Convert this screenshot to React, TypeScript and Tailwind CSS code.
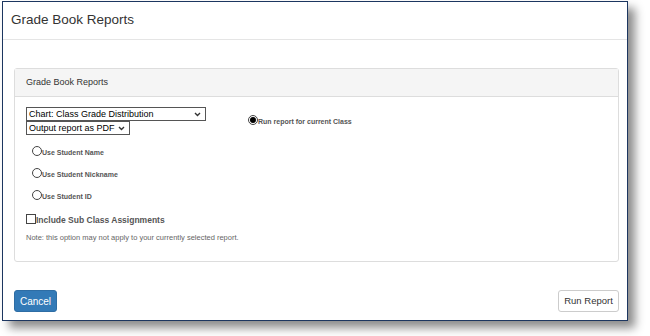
import React from "react";

function FakeSelect({ label, width }: { label: string; width: string }) {
  return (
    <div
      className={`flex items-center justify-between h-[14px] border border-[#555] bg-white pl-[2px] pr-[4px] text-[9px] leading-none text-black whitespace-nowrap ${width}`}
    >
      <span>{label}</span>
      <svg width="7" height="5" viewBox="0 0 7 5" className="mt-[1px] shrink-0">
        <path d="M1 1 L3.5 3.5 L6 1" stroke="#333" strokeWidth="1.4" fill="none" />
      </svg>
    </div>
  );
}

function Radio({ label, checked = false }: { label: string; checked?: boolean }) {
  return (
    <div className="flex items-end">
      <span className="w-[10px] h-[10px] rounded-full border border-[#444] bg-white flex items-center justify-center">
        {checked && <span className="w-[6px] h-[6px] rounded-full bg-black" />}
      </span>
      <span className="text-[7px] font-bold text-[#555] leading-none whitespace-nowrap">{label}</span>
    </div>
  );
}

export default function App() {
  return (
    <div
      className="w-[650px] h-[336px] bg-white overflow-hidden"
      style={{ fontFamily: '"Liberation Sans", Arial, sans-serif' }}
    >
      <div className="ml-[2px] mt-[1px] w-[626px] h-[320px] border border-[#1c3660] bg-white shadow-[7px_7px_9px_rgba(0,0,0,0.45)] flex flex-col">
        <header className="h-[38px] border-b border-[#e5e5e5] flex items-center pl-[8px] text-[13.5px] text-[#333]">
          Grade Book Reports
        </header>

        <div className="pl-[11px] pt-[28px]">
          <section className="w-[605px] h-[194px] rounded-[3px] border border-[#ddd] flex flex-col">
            <div className="h-[28px] bg-[#f5f5f5] border-b border-[#ddd] flex items-center pl-[11px] text-[9px] text-[#333]">
              Grade Book Reports
            </div>

            <div className="pl-[11px] pt-[10px]">
              <div className="flex">
                <div className="flex flex-col">
                  <FakeSelect label="Chart: Class Grade Distribution" width="w-[180px]" />
                  <FakeSelect label="Output report as PDF" width="w-[104px]" />
                </div>
                <div className="ml-[42px] mt-[8px]">
                  <Radio label="Run report for current Class" checked />
                </div>
              </div>

              <div className="ml-[6px] mt-[11px] flex flex-col gap-[12px]">
                <Radio label="Use Student Name" />
                <Radio label="Use Student Nickname" />
                <Radio label="Use Student ID" />
              </div>

              <div className="mt-[14px] flex items-end">
                <span className="w-[10px] h-[10px] border border-[#444] bg-white" />
                <span className="text-[8.5px] font-bold text-[#555] leading-none">
                  Include Sub Class Assignments
                </span>
              </div>

              <p className="mt-[10px] text-[7.5px] text-[#666] leading-none">
                Note: this option may not apply to your currently selected report.
              </p>
            </div>
          </section>
        </div>

        <div className="mt-auto mb-[8px] pl-[11px] pr-[8px] flex justify-between">
          <button className="w-[43px] h-[22px] rounded-[3px] bg-[#337ab7] border border-[#2e6da4] text-white text-[10px]">
            Cancel
          </button>
          <button className="w-[61px] h-[22px] rounded-[3px] bg-white border border-[#ccc] text-[#333] text-[9.5px]">
            Run Report
          </button>
        </div>
      </div>
    </div>
  );
}
